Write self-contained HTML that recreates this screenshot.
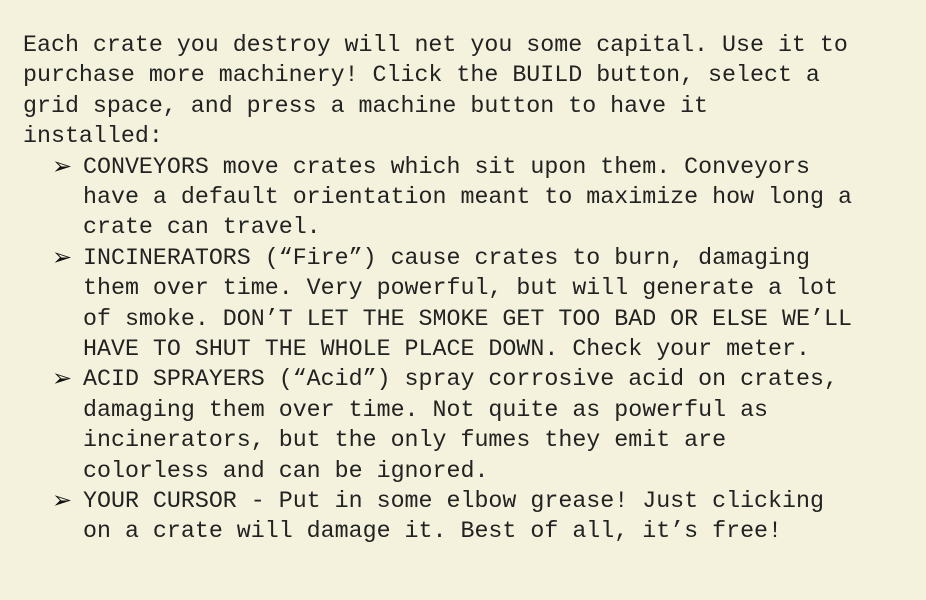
<!DOCTYPE html>
<html><head><meta charset="utf-8"><style>
html,body{margin:0;padding:0;}
body{width:926px;height:600px;background:#f4f2dc;overflow:hidden;position:relative;
font-family:"Courier New","Liberation Mono","DejaVu Sans Mono",monospace;font-size:23.3px;color:#222;}
.l{position:absolute;white-space:pre;line-height:30.4px;height:30.4px;}
.b{position:absolute;left:52px;font-family:"DejaVu Sans",sans-serif;font-size:24px;line-height:30.4px;color:#111;}
</style></head><body>
<div class="l" style="left:23px;top:30px">Each crate you destroy will net you some capital. Use it to</div>
<div class="l" style="left:23px;top:60.4px">purchase more machinery! Click the BUILD button, select a</div>
<div class="l" style="left:23px;top:90.8px">grid space, and press a machine button to have it</div>
<div class="l" style="left:23px;top:121.2px">installed:</div>
<div class="b" style="top:150.6px">➢</div>
<div class="l" style="left:83px;top:151.6px">CONVEYORS move crates which sit upon them. Conveyors</div>
<div class="l" style="left:83px;top:182px">have a default orientation meant to maximize how long a</div>
<div class="l" style="left:83px;top:212.4px">crate can travel.</div>
<div class="b" style="top:241.8px">➢</div>
<div class="l" style="left:83px;top:242.8px">INCINERATORS (“Fire”) cause crates to burn, damaging</div>
<div class="l" style="left:83px;top:273.2px">them over time. Very powerful, but will generate a lot</div>
<div class="l" style="left:83px;top:303.6px">of smoke. DON’T LET THE SMOKE GET TOO BAD OR ELSE WE’LL</div>
<div class="l" style="left:83px;top:334px">HAVE TO SHUT THE WHOLE PLACE DOWN. Check your meter.</div>
<div class="b" style="top:363.4px">➢</div>
<div class="l" style="left:83px;top:364.4px">ACID SPRAYERS (“Acid”) spray corrosive acid on crates,</div>
<div class="l" style="left:83px;top:394.8px">damaging them over time. Not quite as powerful as</div>
<div class="l" style="left:83px;top:425.2px">incinerators, but the only fumes they emit are</div>
<div class="l" style="left:83px;top:455.6px">colorless and can be ignored.</div>
<div class="b" style="top:485px">➢</div>
<div class="l" style="left:83px;top:486px">YOUR CURSOR - Put in some elbow grease! Just clicking</div>
<div class="l" style="left:83px;top:516.4px">on a crate will damage it. Best of all, it’s free!</div>
</body></html>
